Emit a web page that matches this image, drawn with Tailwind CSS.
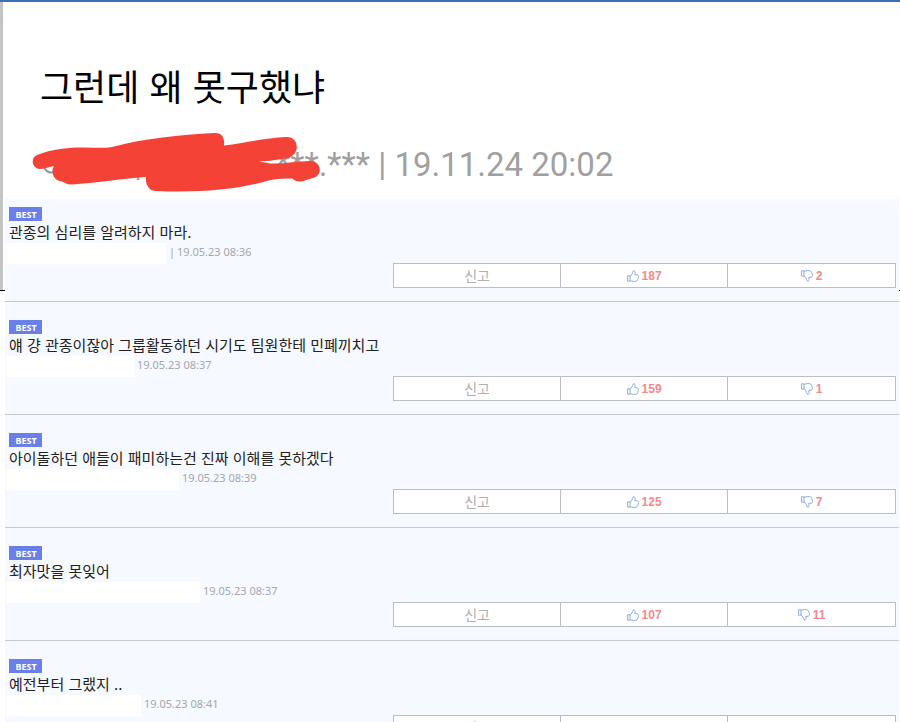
<!DOCTYPE html>
<html lang="ko">
<head>
  <meta charset="UTF-8" />
  <meta name="viewport" content="width=device-width, initial-scale=1.0" />
  <title>그런데 왜 못구했냐</title>
  <script src="https://cdn.jsdelivr.net/npm/@tailwindcss/browser@4"></script>
</head>
<body class="relative h-screen overflow-hidden bg-white font-['Noto_Sans','Noto_Sans_CJK_KR',sans-serif]">
  <svg class="hidden">
    <symbol id="thumb" viewBox="0 0 12 12">
      <path d="M.6 5.800H3V11.200H.600ZM3 6.200C4.800 5.200 5.300 3.200 6.300 .900C8 .4 8.600 1.600 7.700 4.600L10.300 4.800C11.800 5.300 11.700 7 11.200 8C10.900 9.200 10.500 10.200 9.800 10.900C8.500 11.800 5 11.400 3 10.600" />
    </symbol>
  </svg>

  <!-- Cadre -->
  <div class="absolute inset-x-0 top-0 h-[291px] border-b border-black">
    <div class="h-full w-[3px] bg-[#c4c4c4]"></div>
  </div>

  <!-- Titre -->
  <header class="relative border-t-2 border-[#3b70b5] pl-10 pt-[63px] pb-3">
    <h1 class="text-[36px] leading-[40px] text-black font-['Noto_Sans_CJK_KR',sans-serif]">그런데 왜 못구했냐</h1>
    <div class="mt-[37px] flex text-[33px] leading-[45px] text-[#a0a0a0] font-['Roboto',sans-serif]">
      <span class="w-[94px]"></span>
      <span class="w-[142px]">|</span>
      <p>***.*** | 19.11.24 20:02</p>
    </div>
    <svg class="absolute left-[30px] top-[126px]" width="294" height="68" viewBox="30 128 294 68" fill="none" stroke-linecap="round" stroke-linejoin="round" aria-hidden="true">
      <path d="M44 167q3 7 10 5" stroke="#8f9caa" stroke-width="2" />
      <path fill="#f44336" d="M40 169C32 169 30 158 37 155C52 149 70 147 85 147.500C95 147.500 104 148.500 112 147C145 138 180 135 214 133C222 132 225 138 224 145.500C245 143 265 138 286 137C299 136 301 154 288 158C277 160 270 161 259 161.500C263 162 266 163 270 163.500C284 164 298 161 310 161C322 161 323 176 313 178C308 179 303 182 299 181.500C296 181.500 294 180 292 178.500C282 178 272 179 265 181.500C236 190 195 193 156 191C149 191 145 184 146 177C120 179 95 183 72 184.500C68 185 65 183 62 181.500C55 181 51 174 53 168C55 166 53 166 50 167C46 168 43 169 40 169Z" />
    </svg>
  </header>

  <!-- Commentaires -->
  <main id="comment-list" class="relative ml-[5px] mr-px bg-[#f6f9ff]"></main>

  <script>
    const comments = [
      { text: "관종의 심리를 알려하지 마라.", date: "19.05.23 08:36", up: 187, down: 2, mask: 160, bar: true },
      { text: "얘 걍 관종이잖아 그룹활동하던 시기도 팀원한테 민폐끼치고", date: "19.05.23 08:37", up: 159, down: 1, mask: 128 },
      { text: "아이돌하던 애들이 패미하는건 진짜 이해를 못하겠다", date: "19.05.23 08:39", up: 125, down: 7, mask: 173 },
      { text: "최자맛을 못잊어", date: "19.05.23 08:37", up: 107, down: 11, mask: 194 },
      { text: "예전부터 그랬지 ..", date: "19.05.23 08:41", up: 88, down: 4, mask: 135 }
    ];

    document.getElementById("comment-list").innerHTML = comments.map(c => `
      <article class="border-b border-[#c3c9d2] pt-[18px] pb-[13px] first:pt-2">
        <div class="ml-1 h-[14px] w-[33px] bg-[#6b7feb] pl-px text-center text-[9px] leading-[15px] font-bold text-white">BEST</div>
        <p class="pl-1 text-[15px] leading-[22px] text-[#222] font-['Noto_Sans_CJK_KR',sans-serif]">${c.text}</p>
        <div class="flex h-5 items-start text-[11px] leading-[18px] text-[#a5a7ab]">
          <span class="ml-px mr-[3px] h-[21px] shrink-0 bg-white" style="width: ${c.mask}px"></span>
          ${c.bar ? `<span class="w-2">|</span>` : ""}
          <time>${c.date}</time>
        </div>
        <div class="mr-[3px] ml-auto grid h-[25px] w-9/16 grid-cols-3 divide-x divide-[#babdc4] border border-[#babdc4] bg-white">
          <button class="text-sm leading-none text-[#b0b0b0]">신고</button>
          <button aria-label="추천 ${c.up}" class="flex items-center justify-center gap-[3px] text-xs font-bold text-[#f4898d] font-['Liberation_Sans',sans-serif]">
            <svg class="size-3 fill-none stroke-[#8aaade]"><use href="#thumb" /></svg>${c.up}
          </button>
          <button aria-label="반대 ${c.down}" class="flex items-center justify-center gap-[3px] text-xs font-bold text-[#f4898d] font-['Liberation_Sans',sans-serif]">
            <svg class="size-3 -scale-y-100 fill-none stroke-[#8aaade]"><use href="#thumb" /></svg>${c.down}
          </button>
        </div>
      </article>
    `).join("");
  </script>
</body>
</html>
